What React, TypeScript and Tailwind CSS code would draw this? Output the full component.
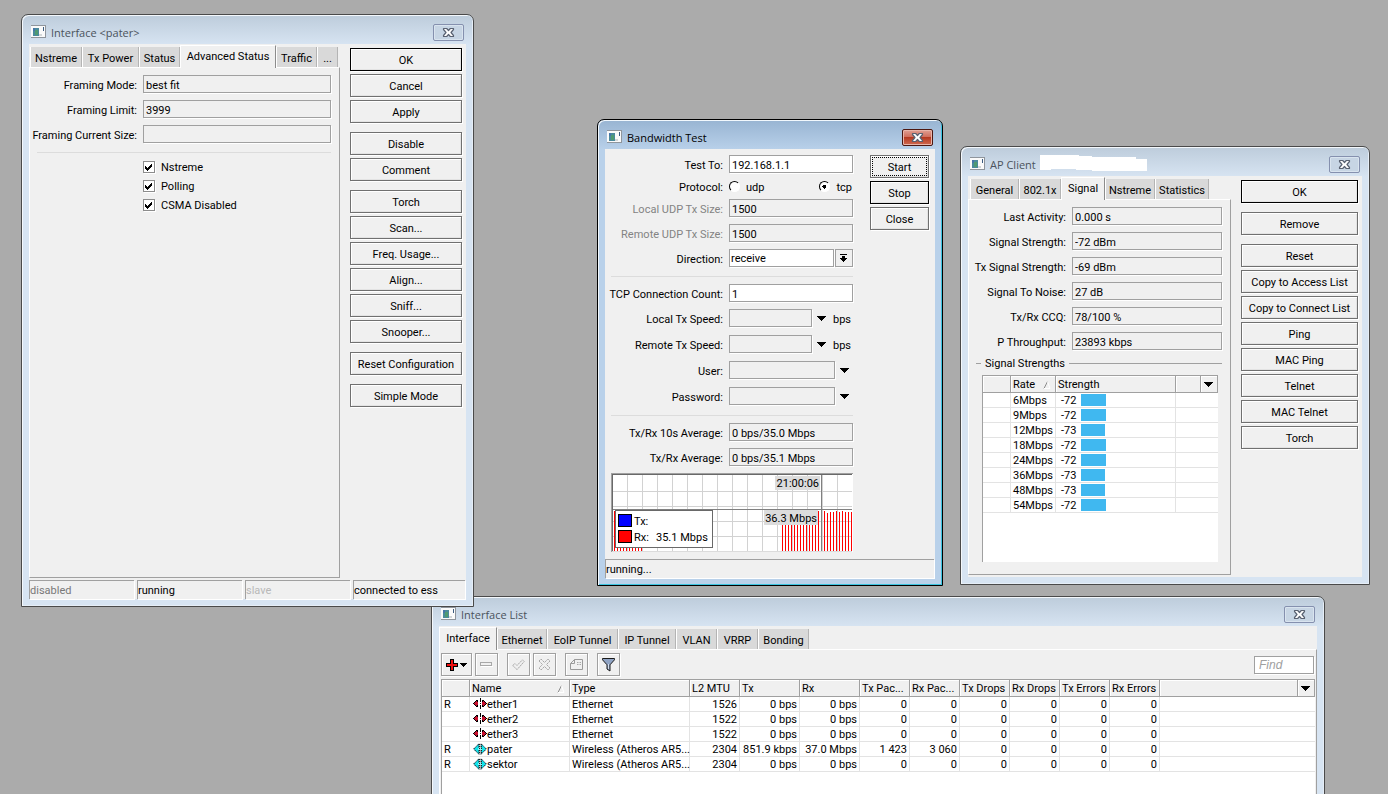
import type { ReactNode } from "react";

const interfaceButtons = [
  ["OK", "Cancel", "Apply"],
  ["Disable", "Comment"],
  ["Torch", "Scan...", "Freq. Usage...", "Align...", "Sniff...", "Snooper..."],
  ["Reset Configuration"],
  ["Simple Mode"],
];

const clientButtons = [
  ["OK"],
  ["Remove"],
  [
    "Reset",
    "Copy to Access List",
    "Copy to Connect List",
    "Ping",
    "MAC Ping",
    "Telnet",
    "MAC Telnet",
    "Torch",
  ],
];

const interfaceTabs = [
  { name: "Nstreme", width: "w-[52px]" },
  { name: "Tx Power", width: "w-[57px]" },
  { name: "Status", width: "w-[41px]" },
  { name: "Advanced Status", width: "w-[96px]" },
  { name: "Traffic", width: "w-[41px]" },
  { name: "...", width: "w-[21px]" },
];

const clientTabs = [
  { name: "General", width: "w-[49px]" },
  { name: "802.1x", width: "w-[42px]" },
  { name: "Signal", width: "w-[44px]" },
  { name: "Nstreme", width: "w-[50px]" },
  { name: "Statistics", width: "w-[54px]" },
];

const listTabs = [
  { name: "Interface", width: "w-[58px]" },
  { name: "Ethernet", width: "w-[50px]" },
  { name: "EoIP Tunnel", width: "w-[71px]" },
  { name: "IP Tunnel", width: "w-[58px]" },
  { name: "VLAN", width: "w-[41px]" },
  { name: "VRRP", width: "w-[41px]" },
  { name: "Bonding", width: "w-[51px]" },
];

const clientFields = [
  ["Last Activity:", "0.000 s"],
  ["Signal Strength:", "-72 dBm"],
  ["Tx Signal Strength:", "-69 dBm"],
  ["Signal To Noise:", "27 dB"],
  ["Tx/Rx CCQ:", "78/100 %"],
  ["P Throughput:", "23893 kbps"],
];

const rates = [
  { rate: "6Mbps", strength: -72 },
  { rate: "9Mbps", strength: -72 },
  { rate: "12Mbps", strength: -73 },
  { rate: "18Mbps", strength: -72 },
  { rate: "24Mbps", strength: -72 },
  { rate: "36Mbps", strength: -73 },
  { rate: "48Mbps", strength: -73 },
  { rate: "54Mbps", strength: -72 },
];

const listColumns = [
  { name: "", width: "w-[28px]" },
  { name: "Name", width: "w-[100px]" },
  { name: "Type", width: "w-[120px]" },
  { name: "L2 MTU", width: "w-[50px]" },
  { name: "Tx", width: "w-[60px]" },
  { name: "Rx", width: "w-[60px]" },
  { name: "Tx Pac...", width: "w-[50px]" },
  { name: "Rx Pac...", width: "w-[50px]" },
  { name: "Tx Drops", width: "w-[50px]" },
  { name: "Rx Drops", width: "w-[50px]" },
  { name: "Tx Errors", width: "w-[50px]" },
  { name: "Rx Errors", width: "w-[50px]" },
];

const interfaces = [
  { flag: "R", name: "ether1", type: "Ethernet", values: ["1526", "0 bps", "0 bps", "0", "0", "0", "0", "0", "0"] },
  { flag: "", name: "ether2", type: "Ethernet", values: ["1522", "0 bps", "0 bps", "0", "0", "0", "0", "0", "0"] },
  { flag: "", name: "ether3", type: "Ethernet", values: ["1522", "0 bps", "0 bps", "0", "0", "0", "0", "0", "0"] },
  { flag: "R", name: "pater", type: "Wireless (Atheros AR5...", values: ["2304", "851.9 kbps", "37.0 Mbps", "1 423", "3 060", "0", "0", "0", "0"] },
  { flag: "R", name: "sektor", type: "Wireless (Atheros AR5...", values: ["2304", "0 bps", "0 bps", "0", "0", "0", "0", "0", "0"] },
];

function WindowIcon() {
  return (
    <svg width="15" height="13" viewBox="0 0 15 13" shapeRendering="crispEdges">
      <rect x="0" y="0" width="15" height="13" fill="#8f959c" />
      <rect x="0" y="1" width="14" height="11" fill="#fafafa" />
      <rect x="2" y="3" width="6" height="8" fill="#4a8a9c" />
      <rect x="4" y="5" width="3" height="5" fill="#4f9a72" />
      <rect x="2" y="3" width="2" height="3" fill="#4675a8" />
      <rect x="8" y="9" width="3" height="2" fill="#d3d7d9" />
      <rect x="12" y="2" width="1" height="4" fill="#3c5c80" />
    </svg>
  );
}

function CloseGlyph() {
  return (
    <svg width="13" height="11" viewBox="0 0 13 11">
      <path
        d="M1.5 1.5h3.2l1.8 2 1.8-2h3.2v1L9 5.5l2.5 3v1H8.3l-1.8-2-1.8 2H1.5v-1L4 5.5l-2.5-3z"
        fill="#fff"
        stroke="#5a6272"
        strokeWidth="1.2"
        strokeLinejoin="round"
      />
    </svg>
  );
}

function DownArrow() {
  return (
    <svg width="9" height="5" viewBox="0 0 9 5" shapeRendering="crispEdges">
      <path d="M0 0h9v1H0zM1 1h7v1H1zM2 2h5v1H2zM3 3h3v1H3zM4 4h1v1H4z" fill="#000" />
    </svg>
  );
}

function SortMark() {
  return (
    <svg width="8" height="8" viewBox="0 0 8 8">
      <path d="M1 7.5 4.5.5" stroke="#8c8c8c" fill="none" />
      <path d="M4.5.5 7 7.5H1" stroke="#fff" fill="none" />
    </svg>
  );
}

function EthernetIcon() {
  return (
    <svg width="14" height="11" viewBox="0 0 14 11" shapeRendering="crispEdges">
      <path d="M0 5h1v1H0zM1 4h1v3H1zM2 3h1v5H2zM3 2h2v7H3z" fill="#000" />
      <path d="M1 5h1v1H1zM2 4h1v3H2zM3 3h1v5H3z" fill="#c8102e" />
      <path d="M14 5h-1v1h1zM13 4h-1v3h1zM12 3h-1v5h1zM11 2H9v7h2z" fill="#000" />
      <path d="M13 5h-1v1h1zM12 4h-1v3h1zM11 3h-1v5h1z" fill="#c8102e" />
      <path d="M4 4h1v3H4zM9 4h1v3H9z" fill="#c8102e" />
      <path d="M7 0h1v4H7zM7 5h1v1H7zM7 7h1v4H7z" fill="#000" />
    </svg>
  );
}

function WirelessIcon() {
  return (
    <svg width="14" height="12" viewBox="0 0 14 12">
      <path d="M.7 6 6 .7v10.6zM13.3 6 8 .7v10.6z" fill="#10e4ea" stroke="#123" strokeDasharray="1.4 .5" />
      <path d="M3 5h8v2H3z" fill="#10e4ea" />
      <path d="M5 6h4" stroke="#fff" />
      <path d="M6.5 1v10M8.5 1v10" stroke="#222" strokeDasharray="1 1" />
    </svg>
  );
}

type WindowProps = {
  title: string;
  place: string;
  active?: boolean;
  mark?: ReactNode;
  children: ReactNode;
};

function Window({ title, place, active, mark, children }: WindowProps) {
  return (
    <section
      className={`absolute flex flex-col rounded-t-[7px] border px-[7px] pb-[7px] ${
        active
          ? "border-black bg-[#b9d1ea] bg-[linear-gradient(#98b4d2,#b9d1ea_30px)] shadow-[inset_1px_1px_0_#f2f8fd,inset_-1px_-1px_0_#3cc4e0]"
          : "border-[#4a4a4a] bg-[#d7e4f2] bg-[linear-gradient(#bdccdb,#d7e4f2_30px)] shadow-[inset_1px_1px_0_#f4f8fc,inset_-1px_-1px_0_#e6eef7]"
      } ${place}`}
    >
      <header className="flex h-[29px] shrink-0 items-start px-[2px] pt-[9px]">
        <span className="pt-px">
          <WindowIcon />
        </span>
        <h2
          className={`ml-[5px] font-['Open_Sans',sans-serif] text-[11px] leading-[18px] ${
            active ? "text-black" : "text-[#4b535c]"
          }`}
        >
          {title}
        </h2>
        {mark}
        <button
          aria-label="Close"
          className={`ml-auto flex h-[17px] w-[31px] items-center justify-center rounded-[2px] border ${
            active
              ? "border-[#4c1710] bg-[linear-gradient(#e0a094,#cf6a58_50%,#b53a22_50%,#cf6a50)] shadow-[inset_0_0_0_1px_#e9b5aa]"
              : "border-[#8590ae] bg-[#c7d5e4] shadow-[inset_0_0_0_1px_#d9e4ef]"
          }`}
        >
          <CloseGlyph />
        </button>
      </header>
      <div className="flex min-h-0 grow flex-col bg-[#f0f0f0]">{children}</div>
    </section>
  );
}

function Tabs({ tabs, current, className = "" }: { tabs: { name: string; width: string }[]; current: string; className?: string }) {
  return (
    <div role="tablist" className={`flex h-[23px] shrink-0 items-end ${className}`}>
      {tabs.map((tab) => (
        <button
          key={tab.name}
          role="tab"
          aria-selected={tab.name === current}
          className={`shrink-0 whitespace-nowrap border-l border-l-white ${tab.width} ${
            tab.name === current
              ? "relative z-10 -mb-px h-[23px] border-t border-r border-t-white border-r-[#8c8c8c] bg-[#f0f0f0] pb-px"
              : "h-[20px] border-r border-r-[#b4b4b4] bg-[#d9d9d9] pt-[2px]"
          }`}
        >
          {tab.name}
        </button>
      ))}
    </div>
  );
}

function PushButton({ children, className = "border-[#707070] pt-[2px]" }: { children: ReactNode; className?: string }) {
  return (
    <button
      className={`h-[23px] w-full border bg-[#f0f0f0] shadow-[1px_1px_0_#fff,inset_1px_1px_0_#fff,inset_-1px_-1px_0_#e3e3e3] ${className}`}
    >
      {children}
    </button>
  );
}

function ButtonColumn({ groups, className }: { groups: string[][]; className: string }) {
  return (
    <div className={`flex shrink-0 flex-col gap-[9px] ${className}`}>
      {groups.map((group) => (
        <div key={group[0]} className="flex flex-col gap-[3px]">
          {group.map((name) => (
            <PushButton key={name} className={name === "OK" ? "border-black pt-[2px]" : "border-[#707070] pt-[2px]"}>
              {name}
            </PushButton>
          ))}
        </div>
      ))}
    </div>
  );
}

type FieldProps = {
  id: string;
  label: string;
  value?: string;
  labelWidth: string;
  boxWidth?: string;
  editable?: boolean;
  dim?: boolean;
  type?: string;
  children?: ReactNode;
};

function Field({ id, label, value = "", labelWidth, boxWidth = "min-w-0 grow", editable, dim, type = "text", children }: FieldProps) {
  return (
    <div className="flex h-[18px] items-center">
      <label
        htmlFor={id}
        className={`mr-[6px] flex shrink-0 justify-end whitespace-nowrap pt-[2px] ${labelWidth} ${dim ? "text-[#838383]" : ""}`}
      >
        {label}
      </label>
      <input
        id={id}
        type={type}
        defaultValue={value}
        readOnly={!editable}
        className={`h-[18px] border border-[#a0a0a0] px-[2px] pt-[2px] shadow-[1px_1px_0_#fff] outline-none ${boxWidth} ${
          editable ? "bg-white" : "bg-[#f0f0f0]"
        }`}
      />
      {children}
    </div>
  );
}

function StatusCell({ children, className }: { children: ReactNode; className: string }) {
  return (
    <span
      className={`h-[19px] border-t border-l border-t-[#a0a0a0] border-l-[#a0a0a0] leading-[19px] shadow-[1px_1px_0_#fff] ${className}`}
    >
      {children}
    </span>
  );
}

function InterfaceWindow() {
  return (
    <Window title="Interface <pater>" place="top-[14px] left-[21px] z-20 h-[593px] w-[453px]">
      <div className="flex min-h-0 grow">
        <div className="flex w-[311px] flex-col">
          <Tabs tabs={interfaceTabs} current="Advanced Status" className="pl-px" />
          <div className="mb-[2px] grow border border-white border-r-[#a0a0a0] border-b-[#a0a0a0] pt-[7px] pr-2 pl-[7px]">
            <div className="flex flex-col gap-[7px]">
              <Field id="framing-mode" label="Framing Mode:" value="best fit" labelWidth="w-[100px]" />
              <Field id="framing-limit" label="Framing Limit:" value="3999" labelWidth="w-[100px]" />
              <Field id="framing-size" label="Framing Current Size:" labelWidth="w-[100px]" />
            </div>
            <hr className="mt-[9px] border-[#dcdcdc]" />
            <div className="mt-1 ml-[106px] flex flex-col">
              {["Nstreme", "Polling", "CSMA Disabled"].map((name) => (
                <label key={name} className="flex h-[19px] items-center gap-[6px]">
                  <span className="relative flex h-3 w-3">
                    <input
                      type="checkbox"
                      defaultChecked
                      className="peer h-3 w-3 appearance-none border border-[#8c8c8c] bg-white shadow-[1px_1px_0_#fff]"
                    />
                    <svg
                      className="pointer-events-none absolute top-0 left-0 hidden peer-checked:block"
                      width="12"
                      height="12"
                      viewBox="0 0 12 12"
                      shapeRendering="crispEdges"
                    >
                      <path d="M2 5h1v3H2zM3 6h1v3H3zM4 7h1v3H4zM5 6h1v3H5zM6 5h1v3H6zM7 4h1v3H7zM8 3h1v3H8z" fill="#000" />
                    </svg>
                  </span>
                  <span className="pt-px">{name}</span>
                </label>
              ))}
            </div>
          </div>
        </div>
        <ButtonColumn groups={interfaceButtons} className="mt-1 ml-[10px] w-[112px]" />
      </div>
      <footer className="flex gap-[3px] pr-px">
        <StatusCell className="w-[105px] text-[#787878]">disabled</StatusCell>
        <StatusCell className="w-[105px]">running</StatusCell>
        <StatusCell className="w-[105px] text-[#b8b8b8]">slave</StatusCell>
        <StatusCell className="grow">connected to ess</StatusCell>
      </footer>
    </Window>
  );
}

function SpeedChart() {
  const columns = Array.from({ length: 15 }, (_, i) => 16 + i * 15);
  const rows = [18, 33, 48, 63];
  const oldBars = Array.from({ length: 10 }, (_, i) => 3 + i * 3);
  const newBars = Array.from({ length: 13 }, (_, i) => 171 + i * 3);
  const lastBars = [38, 40, 39, 39, 38, 39, 38, 39, 39, 39];

  return (
    <svg className="mt-[7px] block text-[11px]" width="242" height="79" viewBox="0 0 242 79" shapeRendering="crispEdges">
      <rect width="242" height="79" fill="#fff" />
      {columns.map((x) => (
        <rect key={x} x={x} y="2" width="1" height="76" fill="#d2d2d2" />
      ))}
      {rows.map((y) => (
        <rect key={y} x="2" y={y} width="239" height="1" fill="#d2d2d2" />
      ))}
      {oldBars.map((x) => (
        <rect key={x} x={x} y="38" width="1" height="40" fill="#f00" />
      ))}
      {newBars.map((x) => (
        <rect key={x} x={x} y="38" width="1" height="40" fill="#f00" />
      ))}
      {lastBars.map((y, i) => (
        <rect key={i} x={213 + i * 3} y={y} width="1" height={78 - y} fill="#f00" />
      ))}
      <rect x="2" y="36" width="239" height="1" fill="#808080" />
      <rect x="210" y="2" width="1" height="76" fill="#808080" />
      <rect x="164" y="3" width="45" height="14" fill="#dcdcdc" />
      <rect x="153" y="37" width="54" height="15" fill="#dcdcdc" />
      <text x="208" y="14" textAnchor="end">21:00:06</text>
      <text x="206" y="49" textAnchor="end">36.3 Mbps</text>
      <rect x="4.5" y="37.5" width="97" height="37" fill="#fff" stroke="#696969" />
      <rect x="7.5" y="41.5" width="13" height="12" fill="#00f" stroke="#000" />
      <rect x="7.5" y="57.5" width="13" height="12" fill="#f00" stroke="#000" />
      <text x="23" y="52">Tx:</text>
      <text x="23" y="68">Rx:</text>
      <text x="45" y="68">35.1 Mbps</text>
      <path d="M0 79V0h242v1H1v78z" fill="#a0a0a0" />
      <path d="M1 78V1h240v1H2v76z" fill="#696969" />
      <path d="M1 78h240v1H1z" fill="#dcdcdc" />
    </svg>
  );
}

const radio =
  "h-[11px] w-[11px] appearance-none rounded-full border border-white border-t-black border-l-black bg-white checked:bg-[radial-gradient(#000_2px,transparent_2px)]";

function BandwidthWindow() {
  return (
    <Window title="Bandwidth Test" active place="top-[119px] left-[597px] z-30 h-[467px] w-[346px]">
      <div className="flex min-h-0 grow">
        <div className="ml-[6px] w-[242px] pt-[6px]">
          <div className="flex flex-col gap-[7px]">
            <Field id="test-to" label="Test To:" value="192.168.1.1" labelWidth="w-[112px]" editable />
            <div className="flex h-3 items-center" role="radiogroup" aria-label="Protocol">
              <span className="mr-[6px] w-[112px] pt-[2px] text-right">Protocol:</span>
              <label className="flex grow items-center gap-[6px]">
                <input type="radio" name="protocol" className={radio} />
                <span className="pt-[2px]">udp</span>
              </label>
              <label className="mr-px flex items-center gap-[6px]">
                <input type="radio" name="protocol" defaultChecked className={radio} />
                <span className="pt-[2px]">tcp</span>
              </label>
            </div>
            <Field id="local-udp" label="Local UDP Tx Size:" value="1500" labelWidth="w-[112px]" dim />
            <Field id="remote-udp" label="Remote UDP Tx Size:" value="1500" labelWidth="w-[112px]" dim />
            <div className="flex h-[18px] items-center">
              <label htmlFor="direction" className="mr-[6px] w-[112px] pt-[2px] text-right">
                Direction:
              </label>
              <select
                id="direction"
                defaultValue="receive"
                className="h-[18px] min-w-0 grow appearance-none border border-[#a0a0a0] bg-white pt-[2px] pl-px leading-[14px] shadow-[1px_1px_0_#fff] outline-none"
              >
                <option>receive</option>
              </select>
              <button
                aria-label="Choose direction"
                className="ml-px flex h-[18px] w-[18px] items-center justify-center border border-[#a0a0a0] shadow-[1px_1px_0_#fff]"
              >
                <svg width="8" height="8" viewBox="0 0 8 8" shapeRendering="crispEdges">
                  <path d="M0 0h7v1H0zM2 2h3v2H2zM0 4h7v1H0zM1 5h5v1H1zM2 6h3v1H2zM3 7h1v1H3z" fill="#000" />
                </svg>
              </button>
            </div>
          </div>
          <hr className="mt-[9px] mb-[7px] border-[#dcdcdc]" />
          <Field id="tcp-count" label="TCP Connection Count:" value="1" labelWidth="w-[112px]" editable />
          <div className="mt-[7px] flex flex-col gap-2">
            {["Local Tx Speed:", "Remote Tx Speed:"].map((name) => (
              <Field key={name} id={name} label={name} labelWidth="w-[112px]" boxWidth="w-[83px] shrink-0">
                <button aria-label={`Set ${name}`} className="mx-[5px] flex h-[18px] items-center">
                  <DownArrow />
                </button>
                <span className="pt-[2px] pl-[2px]">bps</span>
              </Field>
            ))}
            {["User:", "Password:"].map((name) => (
              <Field
                key={name}
                id={name}
                type={name === "Password:" ? "password" : "text"}
                label={name}
                labelWidth="w-[112px]"
                boxWidth="w-[106px] shrink-0"
              >
                <button aria-label={`Set ${name}`} className="ml-[5px] flex h-[18px] items-center">
                  <DownArrow />
                </button>
              </Field>
            ))}
          </div>
          <hr className="mt-[10px] mb-[7px] border-[#dcdcdc]" />
          <div className="flex flex-col gap-[7px]">
            <Field id="average-10" label="Tx/Rx 10s Average:" value="0 bps/35.0 Mbps" labelWidth="w-[112px]" />
            <Field id="average" label="Tx/Rx Average:" value="0 bps/35.1 Mbps" labelWidth="w-[112px]" />
          </div>
          <SpeedChart />
        </div>
        <div className="mt-[6px] ml-[17px] flex w-[59px] flex-col gap-[3px]">
          <PushButton className="border-[#707070] p-px">
            <span className="flex h-full items-center justify-center border border-dotted border-black pt-[2px]">Start</span>
          </PushButton>
          <PushButton className="border-black pt-[2px]">Stop</PushButton>
          <PushButton>Close</PushButton>
        </div>
      </div>
      <footer className="flex pr-px">
        <StatusCell className="grow">running...</StatusCell>
      </footer>
    </Window>
  );
}

function HeaderCell({ children, className = "pl-[2px]" }: { children?: ReactNode; className?: string }) {
  return (
    <th
      className={`h-[17px] overflow-hidden whitespace-nowrap border-r border-b border-[#a0a0a0] bg-[#f0f0f0] pt-[2px] pr-0 pb-0 text-left leading-[14px] font-normal shadow-[inset_1px_1px_0_#fff] ${className}`}
    >
      {children}
    </th>
  );
}

function ColumnMenu() {
  return (
    <button aria-label="Columns" className="flex h-[14px] w-full items-center pb-[2px] pl-[3px]">
      <DownArrow />
    </button>
  );
}

const cell = "h-[15px] whitespace-nowrap border-r border-b border-[#e3e3e3] pt-px pb-0 leading-[13px]";

function ClientWindow() {
  return (
    <Window
      title="AP Client"
      place="top-[146px] left-[960px] z-20 h-[439px] w-[410px]"
      mark={
        <svg className="-mt-px ml-1" width="108" height="17" viewBox="0 0 108 17">
          <path d="M0 0h39v1h13v1h44v2h11v12H52v-1H36v-1H11v1H0z" fill="#fff" />
        </svg>
      }
    >
      <div className="flex min-h-0 grow">
        <div className="flex w-[263px] flex-col">
          <Tabs tabs={clientTabs} current="Signal" className="pl-[2px]" />
          <div className="mb-[2px] grow border border-white border-r-[#a0a0a0] border-b-[#a0a0a0] pt-[7px] pr-2 pl-[7px]">
            <div className="flex flex-col gap-[7px]">
              {clientFields.map(([label, value]) => (
                <Field key={label} id={label} label={label} value={value} labelWidth="w-[90px]" />
              ))}
            </div>
            <fieldset className="mt-[6px]">
              <legend className="flex h-[15px] w-full items-center gap-1">
                <span className="h-px w-[5px] bg-[#a0a0a0]" />
                <span>Signal Strengths</span>
                <span className="h-px grow bg-[#a0a0a0]" />
              </legend>
              <div className="mt-1 mr-1 ml-[6px] h-[187px] border-t border-l border-[#a0a0a0] bg-white">
                <table className="w-full table-fixed border-separate border-spacing-0">
                  <thead>
                    <tr>
                      <HeaderCell className="w-[28px] pl-0" />
                      <HeaderCell className="w-[45px] pl-[2px]">
                        <span className="flex items-center justify-between pr-1">
                          Rate <SortMark />
                        </span>
                      </HeaderCell>
                      <HeaderCell className="w-[120px] pl-[2px]">Strength</HeaderCell>
                      <HeaderCell className="w-[25px] pl-0" />
                      <HeaderCell className="pl-0">
                        <ColumnMenu />
                      </HeaderCell>
                    </tr>
                  </thead>
                  <tbody>
                    {rates.map((row) => (
                      <tr key={row.rate}>
                        <td className={cell} />
                        <td className={`${cell} pr-0 pl-[2px]`}>{row.rate}</td>
                        <td className={`${cell} pr-0 pl-[5px]`}>
                          <span className="flex items-start">
                            <span className="w-5">{row.strength}</span>
                            <span className="h-3 bg-[#40b8f0]" style={{ width: 97 + row.strength }} />
                          </span>
                        </td>
                        <td className={`${cell} border-r-0`} colSpan={2} />
                      </tr>
                    ))}
                  </tbody>
                </table>
              </div>
            </fieldset>
          </div>
        </div>
        <ButtonColumn groups={clientButtons} className="mt-1 ml-[10px] w-[117px]" />
      </div>
    </Window>
  );
}

function ToolButton({ label, wide, children }: { label: string; wide?: boolean; children: ReactNode }) {
  return (
    <button
      aria-label={label}
      className={`flex h-[23px] items-center justify-center gap-[2px] border border-[#a0a0a0] shadow-[1px_1px_0_#fff,inset_1px_1px_0_#fff] ${
        wide ? "w-[31px]" : "w-[23px]"
      }`}
    >
      {children}
    </button>
  );
}

function Toolbar() {
  return (
    <div className="flex items-center py-[3px] pr-px">
      <div className="flex gap-[3px]">
        <ToolButton label="Add" wide>
          <svg width="12" height="12" viewBox="0 0 12 12" shapeRendering="crispEdges">
            <path d="M4 0h4v4h4v4H8v4H4V8H0V4h4z" fill="#000" />
            <path d="M5 1h2v4h4v2H7v4H5V7H1V5h4z" fill="#f01010" />
          </svg>
          <svg width="7" height="4" viewBox="0 0 7 4" shapeRendering="crispEdges">
            <path d="M0 0h7v1H0zM1 1h5v1H1zM2 2h3v1H2zM3 3h1v1H3z" fill="#000" />
          </svg>
        </ToolButton>
        <ToolButton label="Remove">
          <svg width="13" height="5" viewBox="0 0 13 5" shapeRendering="crispEdges">
            <path d="M.5.5h11v3H.5z" fill="#f0f0f0" stroke="#a8a8a8" />
            <path d="M1 4h12v1H1z" fill="#fff" />
          </svg>
        </ToolButton>
      </div>
      <div className="ml-[9px] flex gap-[3px]">
        <ToolButton label="Enable">
          <svg width="13" height="12" viewBox="0 0 13 12">
            <path d="M.8 6.5 3 4.5l2 2L10.5.8l1.7 1.7L5 10.7z" fill="none" stroke="#a8a8a8" strokeDasharray="2 .6" />
          </svg>
        </ToolButton>
        <ToolButton label="Disable">
          <svg width="13" height="13" viewBox="0 0 13 13">
            <path
              d="M1 3 3 1l3.5 3.5L10 1l2 2-3.5 3.5L12 10l-2 2-3.500-3.500L3 12l-2-2 3.5-3.5z"
              fill="none"
              stroke="#a8a8a8"
              strokeDasharray="2 .6"
            />
          </svg>
        </ToolButton>
      </div>
      <div className="ml-[9px] flex gap-[9px]">
        <ToolButton label="Comment">
          <svg width="14" height="12" viewBox="0 0 14 12">
            <path d="M4.5.5h8v10H.5v-6zM4.5.5v4h-4" fill="none" stroke="#9a9a9a" />
            <path d="M7 3.5h4M7 5.5h4" stroke="#a8a8a8" strokeDasharray="1.5 1" />
          </svg>
        </ToolButton>
        <ToolButton label="Filter">
          <svg width="13" height="14" viewBox="0 0 13 14">
            <path d="M.5.5h12v1.3L8 6.8V13L5 11V6.8L.5 1.8z" fill="#8fa3c4" stroke="#1a1a1a" />
            <path d="M6.5 6v5" stroke="#d4deee" />
          </svg>
        </ToolButton>
      </div>
      <input
        aria-label="Find"
        placeholder="Find"
        className="ml-auto h-[18px] w-[60px] border border-[#a0a0a0] bg-white px-1 font-['Liberation_Sans',sans-serif] text-[12px] italic shadow-[1px_1px_0_#fff] outline-none placeholder:text-[#a0a0a0]"
      />
    </div>
  );
}

function ListWindow() {
  return (
    <Window title="Interface List" place="top-[596px] left-[431px] z-10 h-[260px] w-[894px]">
      <Tabs tabs={listTabs} current="Interface" />
      <div className="flex min-h-0 grow flex-col border border-r-[#a0a0a0] border-white px-px">
        <Toolbar />
        <div className="grow border-t border-l border-[#a0a0a0] bg-white">
          <table className="w-full table-fixed border-separate border-spacing-0">
            <thead>
              <tr>
                {listColumns.map((column) => (
                  <HeaderCell key={column.name} className={`pl-[2px] ${column.width}`}>
                    {column.name === "Name" ? (
                      <span className="flex items-center justify-between pr-1">
                        Name <SortMark />
                      </span>
                    ) : (
                      column.name
                    )}
                  </HeaderCell>
                ))}
                <HeaderCell />
                <HeaderCell className="w-[17px] pl-0">
                  <ColumnMenu />
                </HeaderCell>
              </tr>
            </thead>
            <tbody>
              {interfaces.map((row) => (
                <tr key={row.name}>
                  <td className={`${cell} pr-0 pl-[2px]`}>{row.flag}</td>
                  <td className={`${cell} pr-0 pl-[3px]`}>
                    <span className="flex items-start">
                      {row.type === "Ethernet" ? <EthernetIcon /> : <WirelessIcon />}
                      {row.name}
                    </span>
                  </td>
                  <td className={`${cell} pr-0 pl-[2px]`}>{row.type}</td>
                  {row.values.map((value, i) => (
                    <td key={i} className={`${cell} pr-[2px] pl-0 text-right`}>
                      {value}
                    </td>
                  ))}
                  <td className={`${cell} border-r-0`} colSpan={2} />
                </tr>
              ))}
            </tbody>
          </table>
        </div>
      </div>
    </Window>
  );
}

export default function App() {
  return (
    <main className="relative h-screen w-full overflow-hidden bg-[#ababab] font-[Roboto,sans-serif] text-[11px] leading-[15px] text-black">
      <InterfaceWindow />
      <BandwidthWindow />
      <ClientWindow />
      <ListWindow />
    </main>
  );
}
